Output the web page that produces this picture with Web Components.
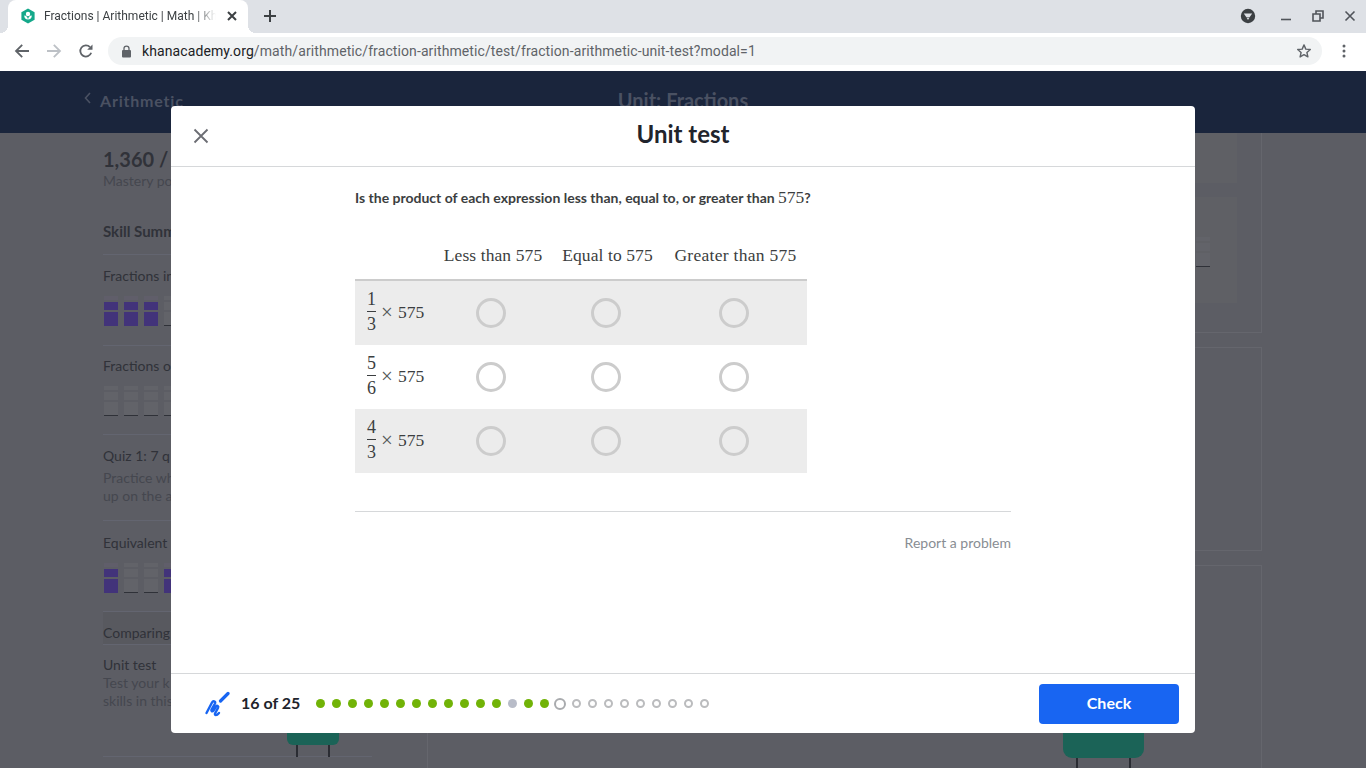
<!DOCTYPE html>
<html lang="en">
<head>
<meta charset="utf-8">
<title>Fractions | Arithmetic | Math | Khan Academy</title>
<style>
  html, body { margin: 0; height: 768px; overflow: hidden; background: #5c5d64; }
  body { display: flex; flex-direction: column; font-family: "Lato", "Liberation Sans", sans-serif; position: relative; }
</style>
</head>
<body>
<browser-chrome url-host="khanacademy.org" url-path="/math/arithmetic/fraction-arithmetic/test/fraction-arithmetic-unit-test?modal=1" tab-title="Fractions | Arithmetic | Math | Kh"></browser-chrome>
<ka-backdrop></ka-backdrop>
<test-modal heading="Unit test">
  <question-table></question-table>
  <progress-dots slot="footer" current="16" total="25" skipped="13"></progress-dots>
</test-modal>

<script>
class BrowserChrome extends HTMLElement {
  connectedCallback() {
    const host = this.getAttribute('url-host');
    const path = this.getAttribute('url-path');
    const title = this.getAttribute('tab-title');
    this.attachShadow({ mode: 'open' });
    this.shadowRoot.innerHTML = `
      <style>
        :host { display: block; height: 71px; font-family: "Roboto", "Liberation Sans", sans-serif; flex: none; }
        .strip { height: 33px; background: #dee1e6; display: flex; align-items: stretch; }
        .tab { width: 240px; margin-left: 8px; background: #fff; border-radius: 8px 8px 0 0; display: flex; align-items: center; padding: 0 0 2px 12px; box-sizing: border-box; flex: none; position: relative; }
        .tab::before, .tab::after { content: ""; position: absolute; bottom: 0; width: 8px; height: 8px; }
        .tab::before { left: -8px; background: radial-gradient(circle at 0 0, transparent 8px, #fff 8px); }
        .tab::after { right: -8px; background: radial-gradient(circle at 100% 0, transparent 8px, #fff 8px); }
        .tab svg.fav { width: 16px; height: 16px; flex: none; }
        .tab span { margin-left: 8px; width: 172px; flex: none; font-size: 12px; color: #3c4043; white-space: nowrap;
          -webkit-mask-image: linear-gradient(to right, #000 150px, transparent 172px); mask-image: linear-gradient(to right, #000 150px, transparent 172px); }
        .tab .x { margin-left: 8px; width: 16px; height: 16px; flex: none; }
        .plus { margin-left: 14px; width: 16px; height: 31px; display: flex; align-items: center; }
        .win { margin-left: auto; display: flex; align-items: center; padding-bottom: 2px; }
        .win svg { display: block; }
        .toolbar { height: 38px; background: #fff; display: flex; align-items: center; padding-bottom: 2px; box-sizing: border-box; }
        .nav { width: 32px; display: flex; justify-content: center; flex: none; }
        .nav:first-child { margin-left: 6px; }
        .omni { margin-left: 6px; width: 1214px; height: 28px; border-radius: 14px; background: #f1f3f4; display: flex; align-items: center; box-sizing: border-box; padding-left: 13px; flex: none; }
        .url { margin-left: 10px; font-size: 14px; color: #5f6368; white-space: nowrap; letter-spacing: .1px; }
        .url b { font-weight: 400; color: #202124; }
        .star { margin-left: auto; margin-right: 10px; display: block; }
        .menu { margin-left: 14px; display: block; }
      </style>
      <div class="strip">
        <div class="tab">
          <svg class="fav" viewBox="0 0 16 16"><path d="M8 .6 14.600 4.300v7.400L8 15.400 1.400 11.700V4.300z" fill="#14a88a"/><path d="M8 3.800a2.200 2.200 0 1 1 0 4.400 2.200 2.200 0 0 1 0-4.400zM4.200 7.400c2.300.2 3.500 1.600 3.800 4.200-2.300-.2-3.700-1.700-3.800-4.200zM11.800 7.400c0 2.500-1.500 4-3.800 4.200.3-2.600 1.500-4 3.800-4.200z" fill="#fff"/></svg>
          <span>${title}</span>
          <svg class="x" viewBox="0 0 16 16"><path d="M4 4l8 8M12 4l-8 8" stroke="#3c4043" stroke-width="2" fill="none"/></svg>
        </div>
        <div class="plus"><svg width="16" height="16" viewBox="0 0 16 16"><path d="M8 2v12M2 8h12" stroke="#3c4043" stroke-width="2" fill="none"/></svg></div>
        <div class="win">
          <svg width="16" height="16" viewBox="0 0 16 16" style="margin-right:24px"><circle cx="8" cy="8" r="7.200" fill="#3c4043"/><path d="M3.800 5.600h8.400L9.600 9.200H6.400z" fill="#dee1e6"/><path d="M6.600 9.800h2.800L8 12z" fill="#dee1e6"/></svg>
          <svg width="12" height="12" viewBox="0 0 12 12" style="margin-right:20px"><path d="M1 9.500h10" stroke="#50545a" stroke-width="1.600"/></svg>
          <svg width="12" height="12" viewBox="0 0 12 12" style="margin-right:20px"><path d="M1 4h7v7H1zM4 4V1h7v7H8" stroke="#50545a" stroke-width="1.600" fill="none"/></svg>
          <svg width="12" height="12" viewBox="0 0 12 12" style="margin-right:10px"><path d="M1.500 1.500l9 9M10.500 1.500l-9 9" stroke="#50545a" stroke-width="1.600" fill="none"/></svg>
        </div>
      </div>
      <div class="toolbar">
        <div class="nav"><svg width="16" height="16" viewBox="0 0 16 16"><path d="M15 8H2.500M8.200 1.800 2 8l6.200 6.200" stroke="#5f6368" stroke-width="1.800" fill="none"/></svg></div>
        <div class="nav"><svg width="16" height="16" viewBox="0 0 16 16"><path d="M1 8h12.500M7.800 1.800 14 8l-6.200 6.200" stroke="#bdc1c6" stroke-width="1.800" fill="none"/></svg></div>
        <div class="nav"><svg width="16" height="16" viewBox="0 0 16 16"><path d="M13.200 9.800A5.600 5.600 0 1 1 12 4.100" stroke="#5f6368" stroke-width="1.800" fill="none"/><path d="M14.500 1.500v5.300H9.200z" fill="#5f6368"/></svg></div>
        <div class="omni">
          <svg width="11" height="13" viewBox="0 0 11 13"><rect x="1" y="5" width="9" height="7.500" rx="1" fill="#5f6368"/><path d="M3 5.500V3.600a2.500 2.500 0 0 1 5 0v1.900" stroke="#5f6368" stroke-width="1.300" fill="none"/></svg>
          <span class="url"><b>${host}</b>${path}</span>
          <svg class="star" width="16" height="16" viewBox="0 0 16 16"><path d="M8 1.900l1.800 4.200 4.500.4-3.400 3 1 4.400L8 11.600 4.100 13.900l1-4.400-3.400-3 4.500-.4z" stroke="#5f6368" stroke-width="1.400" fill="none" stroke-linejoin="round"/></svg>
        </div>
        <svg class="menu" width="16" height="16" viewBox="0 0 16 16"><circle cx="8" cy="3" r="1.500" fill="#5f6368"/><circle cx="8" cy="8" r="1.500" fill="#5f6368"/><circle cx="8" cy="13" r="1.500" fill="#5f6368"/></svg>
      </div>`;
  }
}
customElements.define('browser-chrome', BrowserChrome);

class SkillBars extends HTMLElement {
  connectedCallback() {
    // one letter per bar: p = mastered (purple), g = not started (grey)
    const bars = (this.getAttribute('pattern') || '').split('');
    this.attachShadow({ mode: 'open' });
    this.shadowRoot.innerHTML = `
      <style>
        :host { display: flex; gap: 6px; height: 30px; margin-left: 1px; }
        .bar { width: 14px; height: 30px; display: flex; flex-direction: column; gap: 2px; box-sizing: border-box; }
        .bar i { display: block; }
        .t { height: 4px; background: #626369; }
        .m { height: 8px; background: #626369; }
        .b { flex: 1; background: #626369; }
        .g { border-bottom: 1px solid #2f3138; }
        .p .t { background: #605e6a; }
        .p .m, .p .b { background: #42337a; }
      </style>
      ${bars.map(k => `<div class="bar ${k}"><i class="t"></i><i class="m"></i><i class="b"></i></div>`).join('')}`;
  }
}
customElements.define('skill-bars', SkillBars);

class KaBackdrop extends HTMLElement {
  connectedCallback() {
    this.attachShadow({ mode: 'open' });
    this.shadowRoot.innerHTML = `
      <style>
        :host { display: block; flex: 1; color: #34363d; font-family: "Lato", "Liberation Sans", sans-serif; overflow: hidden; background: #5c5d64; }
        header { height: 62px; box-sizing: border-box; padding-bottom: 4px; background: #1a253c; display: flex; align-items: center; position: relative; color: #4a5162; font-weight: 700; }
        .back { margin-left: 84px; font-size: 16px; display: flex; align-items: center; gap: 8px; letter-spacing: .8px; }
        .back svg { margin-top: -4px; }
        .unit { position: absolute; left: 0; right: 0; text-align: center; font-size: 20px; }
        .cols { display: flex; height: 635px; }
        aside { margin-left: 103px; width: 269px; flex: none; font-size: 14px; line-height: 18px; color: #303239; }
        .sec { border-bottom: 1px solid #636570; box-sizing: border-box; }
        .sub { color: #45474f; }
        .pts { height: 60px; padding-top: 14px; box-sizing: border-box; font-size: 20px; font-weight: 700; line-height: 24px; }
        .pts div { font-size: 14px; font-weight: 400; line-height: 20px; }
        .sum { height: 62px; padding-top: 26px; font-weight: 700; font-size: 15px; line-height: 24px; }
        .skill { padding-top: 11px; }
        .skill skill-bars { margin-top: 11px; }
        .quiz { height: 86px; padding-top: 12px; }
        .quiz .sub { margin-top: 4px; }
        .cmp { height: 33px; padding-top: 12px; background: #58595f; }
        .test { height: 112px; padding-top: 11px; border-bottom: 1px solid #636570; box-sizing: border-box; }
        .sign { margin: 5px 0 0 184px; width: 52px; }
        .sign div { height: 30px; background: #1b6357; border-radius: 0 0 6px 6px; }
        .sign p { height: 12px; margin: 0 9px; border: solid #2a2c33; border-width: 0 2px; }
        main { margin-left: 55px; width: 834px; border-left: 1px solid #65666d; display: flex; flex-direction: column; gap: 14px; }
        .card { border: solid #65666d; border-width: 0 1px 1px 0; flex: none; box-sizing: border-box; }
        .card.c1 { height: 200px; }
        .card.c2 { height: 204px; border-top-width: 1px; }
        .card.c3 { height: 217px; border-top-width: 1px; }
        .panel { margin-left: 700px; width: 109px; background: #5f6065; }
        .p1 { height: 50px; }
        .p2 { height: 106px; margin-top: 14px; padding-top: 40px; padding-left: 67px; box-sizing: border-box; }
        .p2 skill-bars { height: 28px; }
        .sign2 { margin: 135px 0 0 635px; width: 81px; }
        .sign2 div { height: 57px; background: #1b6357; border-radius: 0 0 9px 9px; }
        .sign2 p { margin: 0 13px; height: 11px; border: solid #2a2c33; border-width: 0 2px; }
      </style>
      <header>
        <div class="back"><svg width="8" height="12" viewBox="0 0 8 12"><path d="M6 1 1.500 6 6 11" stroke="#4a5162" stroke-width="1.600" fill="none"/></svg>Arithmetic</div>
        <div class="unit">Unit: Fractions</div>
      </header>
      <div class="cols">
        <aside>
          <div class="pts">1,360 /<div class="sub">Mastery po</div></div>
          <div class="sum sec">Skill Summ</div>
          <div class="skill sec" style="height:91px;padding-top:12px">Fractions in<skill-bars pattern="pppg"></skill-bars></div>
          <div class="skill sec" style="height:89px">Fractions o<skill-bars pattern="gggg"></skill-bars></div>
          <div class="quiz sec">Quiz 1: 7 q<div class="sub">Practice wh<br>up on the a</div></div>
          <div class="skill sec" style="height:91px;padding-top:13px">Equivalent<skill-bars pattern="pggp"></skill-bars></div>
          <div class="cmp sec">Comparing</div>
          <div class="test">Unit test<div class="sub">Test your k<br>skills in this</div>
            <div class="sign"><div></div><p></p></div></div>
        </aside>
        <main>
          <div class="card c1"><div class="panel p1"></div><div class="panel p2"><skill-bars pattern="g"></skill-bars></div></div>
          <div class="card c2"></div>
          <div class="card c3"><div class="sign2"><div></div><p></p></div></div>
        </main>
      </div>`;
  }
}
customElements.define('ka-backdrop', KaBackdrop);

class TestModal extends HTMLElement {
  connectedCallback() {
    const heading = this.getAttribute('heading');
    this.attachShadow({ mode: 'open' });
    this.shadowRoot.innerHTML = `
      <style>
        :host { position: absolute; left: 171px; top: 106px; width: 1024px; height: 627px; background: #fff; border-radius: 4px; display: flex; flex-direction: column; color: #21242c; font-family: "Lato", "Liberation Sans", sans-serif; }
        header { height: 61px; flex: none; box-sizing: border-box; border-bottom: 1px solid #d6d8da; display: flex; align-items: center; justify-content: center; position: relative; }
        h1 { margin: 0 0 5px; font-size: 24px; line-height: 30px; font-weight: 700; }
        .close { position: absolute; left: 22px; top: 22px; width: 16px; height: 16px; }
        .body { flex: 1; padding: 0 184px; display: flex; flex-direction: column; }
        .rule { margin-top: 38px; border-top: 1px solid #d6d8da; }
        .report { margin-top: 22px; text-align: right; font-size: 14px; line-height: 18px; color: #888d93; }
        footer { height: 60px; flex: none; box-sizing: border-box; border-top: 1px solid #d6d8da; display: flex; align-items: center; padding: 0 16px 0 33px; }
        .pen { width: 26px; height: 28px; flex: none; margin-top: 1px; }
        .check { margin-left: auto; width: 140px; height: 40px; background: #1865f2; color: #fff; border: 0; border-radius: 4px; font: 700 16px "Lato", "Liberation Sans", sans-serif; padding: 0 0 2px; }
      </style>
      <header>
        <svg class="close" viewBox="0 0 16 16"><path d="M1.500 1.500l13 13M14.500 1.500l-13 13" stroke="#6b6d73" stroke-width="1.800" fill="none"/></svg>
        <h1>${heading}</h1>
      </header>
      <div class="body">
        <slot></slot>
        <div class="rule"></div>
        <div class="report">Report a problem</div>
      </div>
      <footer>
        <svg class="pen" viewBox="0 0 26 28"><path d="M2.500 23 8 12.500C9 10.500 12 11 11 13.500L7.500 19.500C6.800 21.500 8.500 22 9.500 20.500L12 16.500C13 15 15 16 14 18L11 23.500C10.500 25.500 12.500 26 15 23" stroke="#1865f2" stroke-width="2.400" fill="none" stroke-linecap="round" stroke-linejoin="round"/><path d="M16.500 11 24 3.500" stroke="#1865f2" stroke-width="3.200" stroke-linecap="round"/></svg>
        <slot name="footer"></slot>
        <button class="check">Check</button>
      </footer>`;
  }
}
customElements.define('test-modal', TestModal);

class MathFrac extends HTMLElement {
  connectedCallback() {
    this.attachShadow({ mode: 'open' });
    this.shadowRoot.innerHTML = `
      <style>
        :host { display: inline-flex; flex-direction: column; text-align: center; width: 9px; font-size: 18px; line-height: 20px; letter-spacing: 0; }
        .num { height: 21px; border-bottom: 1px solid #3b3e40; margin-bottom: 2px; line-height: 19px; }
        .den { height: 20px; line-height: 20px; }
      </style>
      <div class="num">${this.getAttribute('n')}</div><div class="den">${this.getAttribute('d')}</div>`;
  }
}
customElements.define('math-frac', MathFrac);

class QuestionTable extends HTMLElement {
  connectedCallback() {
    const rows = [['1', '3'], ['5', '6'], ['4', '3']];
    this.attachShadow({ mode: 'open' });
    this.shadowRoot.innerHTML = `
      <style>
        :host { display: block; color: #3b3e40; }
        .q { margin: 0; padding-top: 20px; font-size: 14px; line-height: 20px; font-weight: 700; white-space: nowrap; }
        .q span, .grid { font-family: "Liberation Serif", "Times New Roman", serif; }
        .q span { font-weight: 400; font-size: 17.500px; }
        .grid { margin-top: 25px; width: 452px; display: grid; grid-template-columns: 79px 118px 111px 144px; grid-template-rows: 48px; grid-auto-rows: 64px; font-size: 17.500px; letter-spacing: .1px; }
        .th { height: 48px; border-bottom: 2px solid #ccc; display: flex; align-items: center; justify-content: center; white-space: nowrap; padding-bottom: 1px; box-sizing: border-box; }
        .th.wide { letter-spacing: .28px; padding-left: 1px; }
        .cell { display: flex; align-items: center; justify-content: center; padding-right: 3px; }
        .cell.c0 { padding-right: 4px; }
        .cell.lbl { justify-content: flex-start; padding: 0 0 2px 12px; white-space: pre; letter-spacing: 0; }
        .odd { background: #ececec; }
        .radio { width: 30px; height: 30px; border: 3px solid #ccc; border-radius: 50%; box-sizing: border-box; }
        .times { width: 22px; text-align: center; font-size: 21px; line-height: 18px; color: #55585a; }
      </style>
      <p class="q">Is the product of each expression less than, equal to, or greater than <span>575</span>?</p>
      <div class="grid">
        <div class="th"></div><div class="th">Less than 575</div><div class="th">Equal to 575</div><div class="th wide">Greater than 575</div>
        ${rows.map((r, i) => {
          const cls = i % 2 === 0 ? 'odd' : '';
          return `<div class="cell lbl ${cls}"><math-frac n="${r[0]}" d="${r[1]}"></math-frac><span class="times">×</span>575</div>` +
            [0, 1, 2].map(c => `<div class="cell c${c} ${cls}"><div class="radio"></div></div>`).join('');
        }).join('')}
      </div>`;
  }
}
customElements.define('question-table', QuestionTable);

class ProgressDots extends HTMLElement {
  connectedCallback() {
    const current = +this.getAttribute('current');
    const total = +this.getAttribute('total');
    const skipped = +this.getAttribute('skipped');
    let dots = '';
    for (let i = 1; i <= total; i++) {
      let cls = 'todo';
      if (i < current) cls = i === skipped ? 'skip' : 'done';
      if (i === current) cls = 'now';
      dots += `<span class="slot"><i class="${cls}"></i></span>`;
    }
    this.attachShadow({ mode: 'open' });
    this.shadowRoot.innerHTML = `
      <style>
        :host { display: flex; align-items: center; margin-left: 11px; }
        .count { font-size: 16px; font-weight: 700; color: #21242c; white-space: nowrap; width: 71px; padding-bottom: 2px; }
        .dots { display: flex; }
        .slot { width: 16px; height: 16px; display: flex; align-items: center; justify-content: center; }
        i { display: block; box-sizing: border-box; border-radius: 50%; width: 9px; height: 9px; }
        .done { background: #71b307; }
        .skip { background: #b8bcc8; }
        .todo { border: 2px solid #bbbcbe; }
        .now { width: 12px; height: 12px; border: 2px solid #a9abae; flex: none; }
      </style>
      <span class="count">${current} of ${total}</span>
      <span class="dots">${dots}</span>`;
  }
}
customElements.define('progress-dots', ProgressDots);
</script>
</body>
</html>
